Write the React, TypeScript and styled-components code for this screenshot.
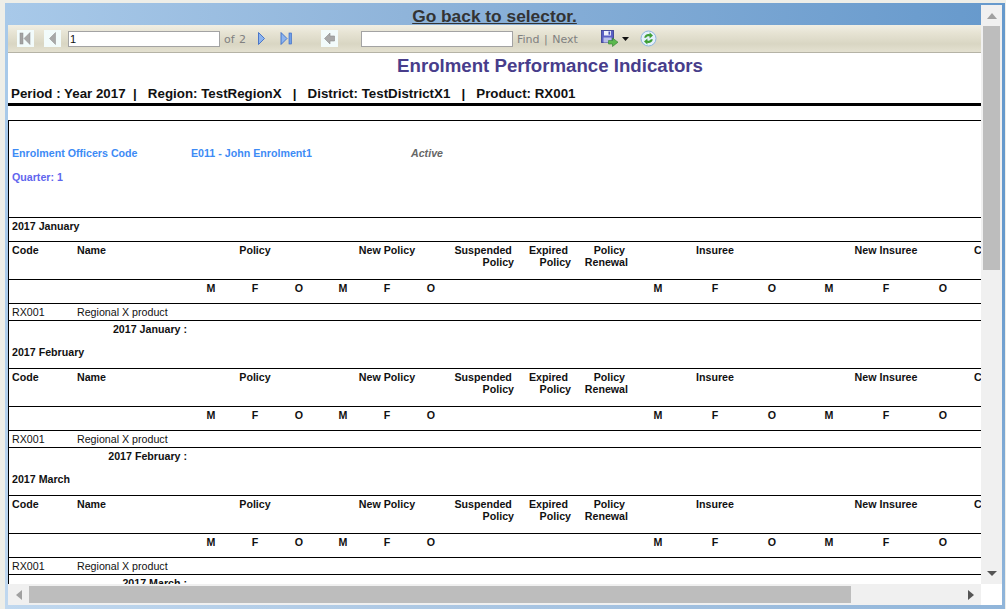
import React from "react";
import styled, { createGlobalStyle } from "styled-components";

const MONTHS = ["January", "February", "March"];
const GENDERS = ["M", "F", "O", "M", "F", "O"];
const COLUMNS = "68px 112px repeat(6, 44px) 62px 58px 57px 56px 58px 56px 58px 56px 58px 120px";

const GlobalStyle = createGlobalStyle`
  html, body {
    margin: 0;
    padding: 0;
    height: 609px;
    overflow: hidden;
    background: #f0f0ea;
  }
`;

const FirstIcon = () => (
  <svg width="17" height="17" viewBox="0 0 17 17">
    <rect x="3" y="3" width="3" height="11" fill="#a3a3a3" stroke="#8a8a8a" strokeWidth="0.5" />
    <path d="M13 2.500v12L7 8.500z" fill="#a8a8a8" stroke="#8c8c8c" strokeWidth="0.5" />
  </svg>
);

const PrevIcon = () => (
  <svg width="17" height="17" viewBox="0 0 17 17">
    <path d="M11.500 2.500v12L5.500 8.500z" fill="#a8a8a8" stroke="#8c8c8c" strokeWidth="0.5" />
  </svg>
);

const NextIcon = () => (
  <svg width="17" height="17" viewBox="0 0 17 17">
    <path d="M5.500 2.500v12l6-6z" fill="#8db4ee" stroke="#2f62c4" strokeWidth="0.8" />
  </svg>
);

const LastIcon = () => (
  <svg width="17" height="17" viewBox="0 0 17 17">
    <path d="M3 2.500v12l6-6z" fill="#8db4ee" stroke="#2f62c4" strokeWidth="0.8" />
    <rect x="11" y="3" width="2.500" height="11" fill="#6f9fe8" stroke="#2f62c4" strokeWidth="0.6" />
  </svg>
);

const BackIcon = () => (
  <svg width="17" height="17" viewBox="0 0 17 17">
    <path d="M9 3v3h4.500v5H9v3L3.500 8.500z" fill="#a8a8a8" stroke="#8c8c8c" strokeWidth="0.6" />
  </svg>
);

const SaveIcon = () => (
  <svg width="18" height="18" viewBox="0 0 18 18">
    <rect x="0.500" y="0.500" width="12" height="12" fill="#5a5fc4" stroke="#33398f" strokeWidth="0.8" />
    <rect x="3" y="1" width="7" height="4.500" fill="#eef0fb" />
    <rect x="7.500" y="1.500" width="1.600" height="3.200" fill="#4a52b8" />
    <rect x="2.500" y="7.500" width="8" height="5" fill="#b9bfe8" />
    <path d="M7.500 10.500h4V8l5.500 4.200-5.500 4.300v-2.500h-4z" fill="#5cb84e" stroke="#2f7d2c" strokeWidth="0.6" />
  </svg>
);

const CaretIcon = () => (
  <svg width="7" height="4" viewBox="0 0 7 4">
    <path d="M0 0h7L3.500 4z" fill="#111" />
  </svg>
);

const RefreshIcon = () => (
  <svg width="17" height="17" viewBox="0 0 17 17">
    <circle cx="8.500" cy="8.500" r="7.500" fill="#e4f0fb" stroke="#8fb6e0" />
    <path d="M4.200 7.800C4.600 4.800 7.400 3.400 9.600 4.200V2.400l3.400 3.200-3.400 2.900V6.600C8 6 6.800 6.500 6.200 7.800z" fill="#3f9f34" />
    <path d="M12.800 9.200C12.400 12.200 9.600 13.600 7.400 12.800v1.800L4 11.400l3.400-2.900v1.900C9 11 10.200 10.500 10.800 9.200z" fill="#3f9f34" />
  </svg>
);

const ArrowUp = styled.div<{ $color: string }>`
  width: 0;
  height: 0;
  border-left: 5px solid transparent;
  border-right: 5px solid transparent;
  border-bottom: 6px solid ${({ $color }) => $color};
`;

const ArrowDown = styled.div<{ $color: string }>`
  width: 0;
  height: 0;
  border-left: 5px solid transparent;
  border-right: 5px solid transparent;
  border-top: 5px solid ${({ $color }) => $color};
`;

const ArrowLeft = styled.div<{ $color: string }>`
  width: 0;
  height: 0;
  border-top: 5px solid transparent;
  border-bottom: 5px solid transparent;
  border-right: 6px solid ${({ $color }) => $color};
`;

const ArrowRight = styled.div<{ $color: string }>`
  width: 0;
  height: 0;
  border-top: 5px solid transparent;
  border-bottom: 5px solid transparent;
  border-left: 6px solid ${({ $color }) => $color};
`;

const PeriodBlock = ({ month, first }: { month: string; first: boolean }) => (
  <>
    <TitleRow $ruled={first}>2017 {month}</TitleRow>
    <TableRow $height={38}>
      <Cell>Code</Cell>
      <Cell>Name</Cell>
      <Cell $span={3} $align="center">Policy</Cell>
      <Cell $span={3} $align="center">New Policy</Cell>
      <Cell $align="right" $pad={1}>{"Suspended\u2009"}<br />Policy</Cell>
      <Cell $align="right" $pad={2}>{"Expired "}<br />Policy</Cell>
      <Cell $align="right" $pad={2}>{"Policy "}<br />Renewal</Cell>
      <Cell $span={3} $align="center">Insuree</Cell>
      <Cell $span={3} $align="center">New Insuree</Cell>
      <Cell $lead={2}>Contribution</Cell>
    </TableRow>
    <TableRow $height={24}>
      <Cell />
      <Cell />
      {GENDERS.map((g, i) => (
        <Cell key={i} $align="center">{g}</Cell>
      ))}
      <Cell />
      <Cell />
      <Cell />
      {GENDERS.map((g, i) => (
        <Cell key={i} $align="center">{g}</Cell>
      ))}
    </TableRow>
    <TableRow $height={17}>
      <Cell $plain>RX001</Cell>
      <Cell $plain>Regional X product</Cell>
    </TableRow>
    <TableRow $height={24}>
      <Cell $span={2} $align="right" $pad={2}>2017 {month} :</Cell>
    </TableRow>
  </>
);

export default function App() {
  return (
    <>
      <GlobalStyle />
      <Page>
        <Frame>
          <MainColumn>
            <BackLinkBar>
              <BackLink href="#">Go back to selector.</BackLink>
            </BackLinkBar>
            <Toolbar>
              <ToolButton $left={9}><FirstIcon /></ToolButton>
              <ToolButton $left={10}><PrevIcon /></ToolButton>
              <ToolInput $left={7} $width={152} defaultValue="1" readOnly />
              <ToolText $left={4} $width={29}>of 2</ToolText>
              <PlainButton $left={0}><NextIcon /></PlainButton>
              <PlainButton $left={8}><LastIcon /></PlainButton>
              <ToolButton $left={26}><BackIcon /></ToolButton>
              <ToolInput $left={23} $width={152} readOnly />
              <ToolText $left={4} $width={61}>Find | Next</ToolText>
              <PlainButton $left={23}><SaveIcon /></PlainButton>
              <CaretSlot><CaretIcon /></CaretSlot>
              <PlainButton $left={11}><RefreshIcon /></PlainButton>
            </Toolbar>
            <Viewport>
              <Report>
                <ReportTitle>Enrolment Performance Indicators</ReportTitle>
                <ParamLine>
                  Period : Year 2017{"  "}|{"   "}Region: TestRegionX{"   "}|{"   "}District: TestDistrictX1{"   "}|{"   "}Product: RX001
                </ParamLine>
                <Sheet>
                  <OfficerBlock>
                    <OfficerRow>
                      <OfficerCell $width={179} $color="#3d8bf5">Enrolment Officers Code</OfficerCell>
                      <OfficerCell $width={220} $color="#3d8bf5">E011 - John Enrolment1</OfficerCell>
                      <ActiveFlag>Active</ActiveFlag>
                    </OfficerRow>
                    <QuarterRow>Quarter: 1</QuarterRow>
                  </OfficerBlock>
                  {MONTHS.map((month, i) => (
                    <PeriodBlock key={month} month={month} first={i === 0} />
                  ))}
                </Sheet>
              </Report>
            </Viewport>
            <HScrollbar>
              <ScrollEnd $width={21}><ArrowLeft $color="#a0a0a0" /></ScrollEnd>
              <HThumb />
              <HTrack />
              <ScrollEnd $width={21}><ArrowRight $color="#555" /></ScrollEnd>
            </HScrollbar>
          </MainColumn>
          <SideColumn>
            <VScrollbar>
              <VEnd><ArrowUp $color="#a0a0a0" /></VEnd>
              <VThumb />
              <VTrack />
              <VEnd><ArrowDown $color="#555" /></VEnd>
            </VScrollbar>
            <Corner />
          </SideColumn>
        </Frame>
      </Page>
    </>
  );
}

const Page = styled.div`
  box-sizing: border-box;
  width: 1006px;
  height: 609px;
  padding: 3px 1px 0 5px;
  background: #eeeee8;
  font-family: "Liberation Sans", Arial, sans-serif;
`;

const Frame = styled.div`
  box-sizing: border-box;
  display: flex;
  width: 1000px;
  height: 606px;
  padding: 0 3px 1px 3px;
  background: linear-gradient(to bottom, rgba(255, 255, 255, 0) 40%, rgba(255, 255, 255, 0.28) 100%),
    linear-gradient(to right, #a8c9e9 0%, #8fb4da 40%, #6699cc 100%);
`;

const MainColumn = styled.div`
  display: flex;
  flex-direction: column;
  width: 973px;
  height: 605px;
`;

const BackLinkBar = styled.div`
  height: 22px;
  line-height: 27px;
  text-align: center;
  overflow: hidden;
`;

const BackLink = styled.a`
  color: #333;
  font-size: 17.33px;
  font-weight: bold;
  text-decoration: underline;
`;

const Toolbar = styled.div`
  box-sizing: border-box;
  display: flex;
  align-items: center;
  height: 28px;
  border-bottom: 1px solid #b5b3a6;
  background: linear-gradient(to bottom, #f1efe4 0%, #e6e3d3 30%, #d9d6c3 70%, #e4e1d1 100%);
`;

const ToolButton = styled.div<{ $left: number }>`
  width: 17px;
  height: 17px;
  margin-left: ${({ $left }) => $left}px;
  background: #f2fbfb;
  flex: none;
`;

const PlainButton = styled.div<{ $left: number }>`
  display: flex;
  margin-left: ${({ $left }) => $left}px;
  flex: none;
`;

const CaretSlot = styled.div`
  display: flex;
  margin-left: 3px;
  flex: none;
`;

const ToolInput = styled.input<{ $left: number; $width: number }>`
  box-sizing: border-box;
  width: ${({ $width }) => $width}px;
  height: 16px;
  margin: 0 0 0 ${({ $left }) => $left}px;
  padding: 0 1px;
  border: 1px solid #a3a3a3;
  outline: none;
  background: #fff;
  color: #111;
  font-family: "Liberation Sans", Arial, sans-serif;
  font-size: 11px;
  flex: none;
`;

const ToolText = styled.div<{ $left: number; $width: number }>`
  width: ${({ $width }) => $width}px;
  margin-left: ${({ $left }) => $left}px;
  padding-top: 2px;
  color: #808080;
  font-family: "DejaVu Sans", Verdana, sans-serif;
  font-size: 11px;
  word-spacing: 1px;
  white-space: nowrap;
  flex: none;
`;

const Viewport = styled.div`
  height: 531px;
  background: #fff;
  overflow: hidden;
`;

const Report = styled.div`
  width: 1084px;
`;

const ReportTitle = styled.div`
  height: 27px;
  line-height: 26px;
  text-align: center;
  color: #483d8b;
  font-size: 18.67px;
  font-weight: bold;
`;

const ParamLine = styled.div`
  height: 23px;
  padding-left: 3px;
  border-bottom: 3px solid #000;
  line-height: 27px;
  color: #111;
  font-size: 13.33px;
  font-weight: bold;
  white-space: pre;
`;

const Sheet = styled.div`
  margin-top: 14px;
  border-left: 1px solid #000;
  font-size: 10.67px;
  color: #111;
`;

const OfficerBlock = styled.div`
  box-sizing: border-box;
  height: 97px;
  padding: 26px 0 0 3px;
  border-top: 1px solid #000;
`;

const OfficerRow = styled.div`
  display: flex;
  line-height: 12px;
  font-weight: bold;
`;

const OfficerCell = styled.div<{ $color: string; $width: number }>`
  width: ${({ $width }) => $width}px;
  color: ${({ $color }) => $color};
`;

const ActiveFlag = styled.div`
  color: #666;
  font-style: italic;
`;

const QuarterRow = styled.div`
  margin-top: 12px;
  line-height: 12px;
  color: #5f66ee;
  font-weight: bold;
`;

const TitleRow = styled.div<{ $ruled: boolean }>`
  box-sizing: border-box;
  height: 24px;
  padding: 2px 0 0 3px;
  border-top: ${({ $ruled }) => ($ruled ? "1px solid #000" : "none")};
  line-height: 12px;
  font-weight: bold;
`;

const TableRow = styled.div<{ $height: number }>`
  box-sizing: border-box;
  display: grid;
  grid-template-columns: ${COLUMNS};
  height: ${({ $height }) => $height}px;
  padding-top: 2px;
  border-top: 1px solid #000;
  line-height: 12px;
`;

const Cell = styled.div<{
  $span?: number;
  $align?: string;
  $pad?: number;
  $lead?: number;
  $plain?: boolean;
}>`
  grid-column: span ${({ $span }) => $span ?? 1};
  padding-right: ${({ $pad }) => $pad ?? 0}px;
  padding-left: ${({ $lead }) => $lead ?? 0}px;
  text-align: ${({ $align }) => $align ?? "left"};
  font-weight: ${({ $plain }) => ($plain ? "normal" : "bold")};
  white-space: pre;
  &:first-child {
    padding-left: ${({ $align }) => ($align ? 0 : 3)}px;
  }
`;

const HScrollbar = styled.div`
  display: flex;
  align-items: center;
  height: 21px;
  background: #f0f0f0;
`;

const ScrollEnd = styled.div<{ $width: number }>`
  display: flex;
  align-items: center;
  justify-content: center;
  width: ${({ $width }) => $width}px;
  height: 100%;
  flex: none;
`;

const HThumb = styled.div`
  width: 822px;
  height: 17px;
  background: #bdbdbd;
`;

const HTrack = styled.div`
  flex: 1;
`;

const SideColumn = styled.div`
  display: flex;
  flex-direction: column;
  width: 21px;
  padding-top: 2px;
`;

const VScrollbar = styled.div`
  display: flex;
  flex-direction: column;
  align-items: center;
  height: 579px;
  background: #f0f0f0;
`;

const VEnd = styled.div`
  display: flex;
  align-items: center;
  justify-content: center;
  height: 21px;
  flex: none;
`;

const VThumb = styled.div`
  width: 17px;
  height: 244px;
  background: #bdbdbd;
`;

const VTrack = styled.div`
  flex: 1;
`;

const Corner = styled.div`
  height: 21px;
  background: #fff;
`;
